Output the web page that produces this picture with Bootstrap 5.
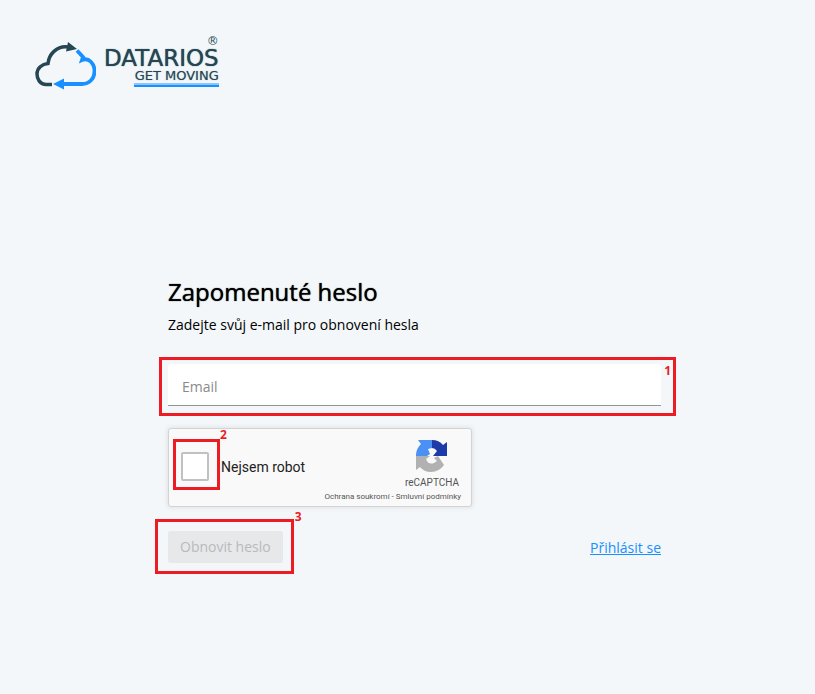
<!DOCTYPE html>
<html lang="cs">
<head>
<meta charset="utf-8">
<meta name="viewport" content="width=device-width, initial-scale=1">
<title>Datarios – Zapomenuté heslo</title>
<link rel="stylesheet" href="https://cdn.jsdelivr.net/npm/bootstrap@5.3.0/dist/css/bootstrap.min.css">
<style>
body { background: #f3f7fa; color: #000; font-family: "Open Sans", "Noto Sans", sans-serif; font-size: 14px; line-height: 20px; }
.site-header { padding: 36px 34px 0; }
.brand { color: #264653; font-family: "DejaVu Sans", sans-serif; gap: 8px; }
.brand-cloud { width: 62px; height: 48px; margin-top: 6px; }
.brand-reg { font-size: 12px; line-height: 11px; }
.brand-name { font-size: 23px; line-height: 22px; text-shadow: 0 0 1px #264653; }
.brand-tag { font-size: 13px; line-height: 13px; text-shadow: 0 0 1px rgba(38,70,83,.5); }
.brand-rule { width: 85px; height: 4px; margin-top: 1px; background: #1890ff; border-top: 2px solid #8cc6fb; }
.reset-area { padding: 186px 16px 40px 30px; }
.reset-form { max-width: 493px; }
.reset-title { font-size: 24px; line-height: 32px; margin-bottom: 7px; font-weight: 500; text-shadow: 0 0 1px #000; }
.reset-hint { margin-bottom: 22px; }
.marker { position: relative; border: 3px solid #ed1c24; }
.marker-no { position: absolute; color: #ed1c24; font: bold 12px/12px "Noto Sans", sans-serif; }
.mark-mail { padding: 4px 12px 7px 6px; margin: 0 -15px 12px -9px; }
.mark-mail .marker-no { top: 5px; right: 2px; }
.form-floating > .mail-input, .form-floating > .mail-input:focus { height: 42px; min-height: 42px; border: 0; border-bottom: 1px solid #949494; border-radius: 4px 4px 0 0; padding: 14px 14px 2px; font-size: 14px; background: #fff; box-shadow: none; }
.form-floating > .mail-label { padding: 12px 13px 8px; color: #8a8a8a; line-height: 20px; }
.captcha { width: 304px; max-width: 100%; height: 79px; background: #f9f9f9; border: 1px solid #d3d3d3; border-radius: 3px; box-shadow: 0 0 4px 1px rgba(0,0,0,.08); font-family: Roboto, sans-serif; padding: 10px 10px 0 4px; }
.mark-check { padding: 10px 8px 6px 5px; width: 47px; height: 51px; }
.mark-check .marker-no { left: 44px; top: -13px; }
.robot-check { width: 28px; height: 29px; margin: 0; border: 2px solid #c1c1c1; border-radius: 2px; background: #fff; display: block; float: none; }
.form-check-input[type=checkbox].robot-check { border-radius: 2px; }
.robot-label { font-size: 14px; line-height: 20px; margin: 4px 0 0 1px; color: #222; }
.captcha-side { color: #555; }
.captcha-logo { width: 32px; height: 34px; margin-right: 13px; }
.captcha-name { font-size: 10px; line-height: 12px; margin: 4px 2px 0 0; }
.captcha-links { font-size: 8px; line-height: 10px; margin-top: 3px; white-space: nowrap; }
.captcha-links a { color: #555; text-decoration: none; }
.mark-send { padding: 9px 8px 8px 10px; margin-left: -13px; }
.mark-send .marker-no { right: -11px; top: -11px; }
.send-btn, .send-btn:disabled { background: #e6e8ea; color: #b8babc; border: 0; border-radius: 3px; font-size: 14px; line-height: 20px; padding: 6px 12px; opacity: 1; display: block; }
.login-link { color: #1890ff; font-size: 14px; margin-top: 3px; }
</style>
<script src="https://cdn.jsdelivr.net/npm/bootstrap@5.3.0/dist/js/bootstrap.bundle.min.js" defer></script>
</head>
<body>
<header class="site-header">
  <div class="brand d-flex align-items-start">
    <svg class="brand-cloud flex-shrink-0" viewBox="0 0 62 48" fill="none" aria-hidden="true">
      <path d="M18 42.500H12C6 42.500 3 37 3 32C3 26 8 22 14 21.500C15 12 23 3.500 34 5" stroke="#264653" stroke-width="3.500"/>
      <path d="M34 0L43 7L32 9.500Z" fill="#264653"/>
      <path d="M43 8.500L49 15L48 18C55 15 60.500 22 60.500 29C60.500 37 55 42 48 42H27" stroke="#1890ff" stroke-width="3.800"/>
      <path d="M19 42L30 36.500V47.500Z" fill="#1890ff"/>
    </svg>
    <div class="d-flex flex-column align-items-end">
      <span class="brand-reg">®</span>
      <span class="brand-name">DATARIOS</span>
      <span class="brand-tag">GET MOVING</span>
      <span class="brand-rule"></span>
    </div>
  </div>
</header>
<main class="reset-area">
  <form class="reset-form mx-auto">
    <h1 class="reset-title">Zapomenuté heslo</h1>
    <p class="reset-hint">Zadejte svůj e-mail pro obnovení hesla</p>
    <div class="marker mark-mail">
      <div class="form-floating">
        <input class="form-control mail-input" type="email" id="email" placeholder=" ">
        <label class="mail-label" for="email">Email</label>
      </div>
      <span class="marker-no">1</span>
    </div>
    <div class="captcha d-flex justify-content-between">
      <div class="d-flex align-items-center align-self-start">
        <div class="marker mark-check flex-shrink-0">
          <input class="form-check-input robot-check" type="checkbox" id="robot">
          <span class="marker-no">2</span>
        </div>
        <label class="robot-label" for="robot">Nejsem robot</label>
      </div>
      <div class="captcha-side d-flex flex-column align-items-end">
        <svg class="captcha-logo" viewBox="0 0 32 34" aria-hidden="true">
          <path d="M0 17A16 16 0 0 1 5 5L2 1H16V9L12 10L14 15L11 17Z" fill="#4a90f5"/>
          <path d="M16 1Q23 1 27 6L31 3V17H17L21 12Q19 9 16 9Z" fill="#1c3aa9"/>
          <path d="M0 17H14L10 20Q12 26 18 24L21 22L18 19L22 17L28 26Q23 33 15 33Q8 33 4 28L0 31Z" fill="#b1b1b1"/>
        </svg>
        <div class="captcha-name">reCAPTCHA</div>
        <div class="captcha-links"><a href="#">Ochrana soukromí</a> - <a href="#">Smluvní podmínky</a></div>
      </div>
    </div>
    <div class="d-flex justify-content-between align-items-center mt-2 pt-1">
      <div class="marker mark-send">
        <button class="btn send-btn" type="submit" disabled>Obnovit heslo</button>
        <span class="marker-no">3</span>
      </div>
      <a class="login-link" href="#">Přihlásit se</a>
    </div>
  </form>
</main>
</body>
</html>
